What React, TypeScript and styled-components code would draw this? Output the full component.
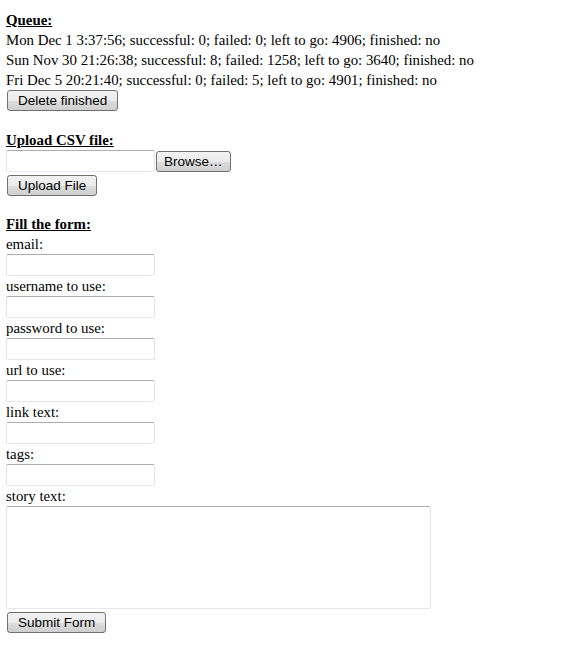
import React from 'react';
import styled, { createGlobalStyle } from 'styled-components';

const queue = [
  'Mon Dec 1 3:37:56; successful: 0; failed: 0; left to go: 4906; finished: no',
  'Sun Nov 30 21:26:38; successful: 8; failed: 1258; left to go: 3640; finished: no',
  'Fri Dec 5 20:21:40; successful: 0; failed: 5; left to go: 4901; finished: no',
];

const fields = ['email:', 'username to use:', 'password to use:', 'url to use:', 'link text:', 'tags:'];

const GlobalStyle = createGlobalStyle`
  html, body {
    margin: 0;
    padding: 0;
    background: #ffffff;
  }
  body {
    font-family: "Liberation Serif", "Times New Roman", serif;
    font-size: 14.85px;
    color: #000000;
  }
`;

const Page = styled.div`
  padding: 10px 6px 0 6px;
  line-height: 20px;
`;

const Section = styled.section<{ $gap?: number }>`
  display: flex;
  flex-direction: column;
  align-items: flex-start;
  margin-top: ${(p) => p.$gap ?? 0}px;
`;

const Heading = styled.div`
  font-weight: bold;
  text-decoration: underline;
  height: 20px;
`;

const Line = styled.div`
  height: 20px;
  white-space: nowrap;
`;

const Button = styled.button<{ $pad?: number }>`
  font-family: "Liberation Sans", Arial, sans-serif;
  font-size: 13.5px;
  color: #000;
  height: 21px;
  padding: 0 ${(p) => p.$pad ?? 10}px;
  margin: 0 0 0 1px;
  border: 1px solid #707070;
  border-radius: 3px;
  background: linear-gradient(to bottom, #f2f2f2 0%, #ebebeb 50%, #dddddd 51%, #cfcfcf 100%);
  line-height: 19px;
`;

const FileRow = styled.div`
  display: flex;
  align-items: flex-start;
  gap: 0;
  margin-bottom: 3px;

  & > button {
    margin-top: 1px;
  }
`;

const TextInput = styled.input`
  box-sizing: border-box;
  width: 149px;
  height: 22px;
  margin: 0;
  padding: 1px 3px;
  border: 1px solid #e2e3ea;
  border-top-color: #abadb3;
  border-bottom-color: #e3e9ef;
  border-radius: 2px;
  background: #fff;
  font-family: "Liberation Sans", Arial, sans-serif;
  font-size: 13px;
`;

const Label = styled.div`
  height: 20px;
`;

const StoryArea = styled.textarea`
  box-sizing: border-box;
  width: 425px;
  height: 103px;
  margin: 0 0 3px 0;
  padding: 2px;
  border: 1px solid #e2e3ea;
  border-top-color: #abadb3;
  border-bottom-color: #e3e9ef;
  border-radius: 2px;
  resize: none;
  font-family: "Liberation Mono", monospace;
  font-size: 13px;
`;

const App: React.FC = () => {
  return (
    <>
      <GlobalStyle />
      <Page>
        <Section>
          <Heading>Queue:</Heading>
          {queue.map((q) => (
            <Line key={q}>{q}</Line>
          ))}
          <Button>Delete finished</Button>
        </Section>

        <Section $gap={19}>
          <Heading>Upload CSV file:</Heading>
          <FileRow>
            <TextInput type="text" />
            <Button $pad={7}>Browse…</Button>
          </FileRow>
          <Button>Upload File</Button>
        </Section>

        <Section $gap={18}>
          <Heading>Fill the form:</Heading>
          {fields.map((f) => (
            <React.Fragment key={f}>
              <Label>{f}</Label>
              <TextInput type="text" />
            </React.Fragment>
          ))}
          <Label>story text:</Label>
          <StoryArea />
          <Button>Submit Form</Button>
        </Section>
      </Page>
    </>
  );
};

export default App;
